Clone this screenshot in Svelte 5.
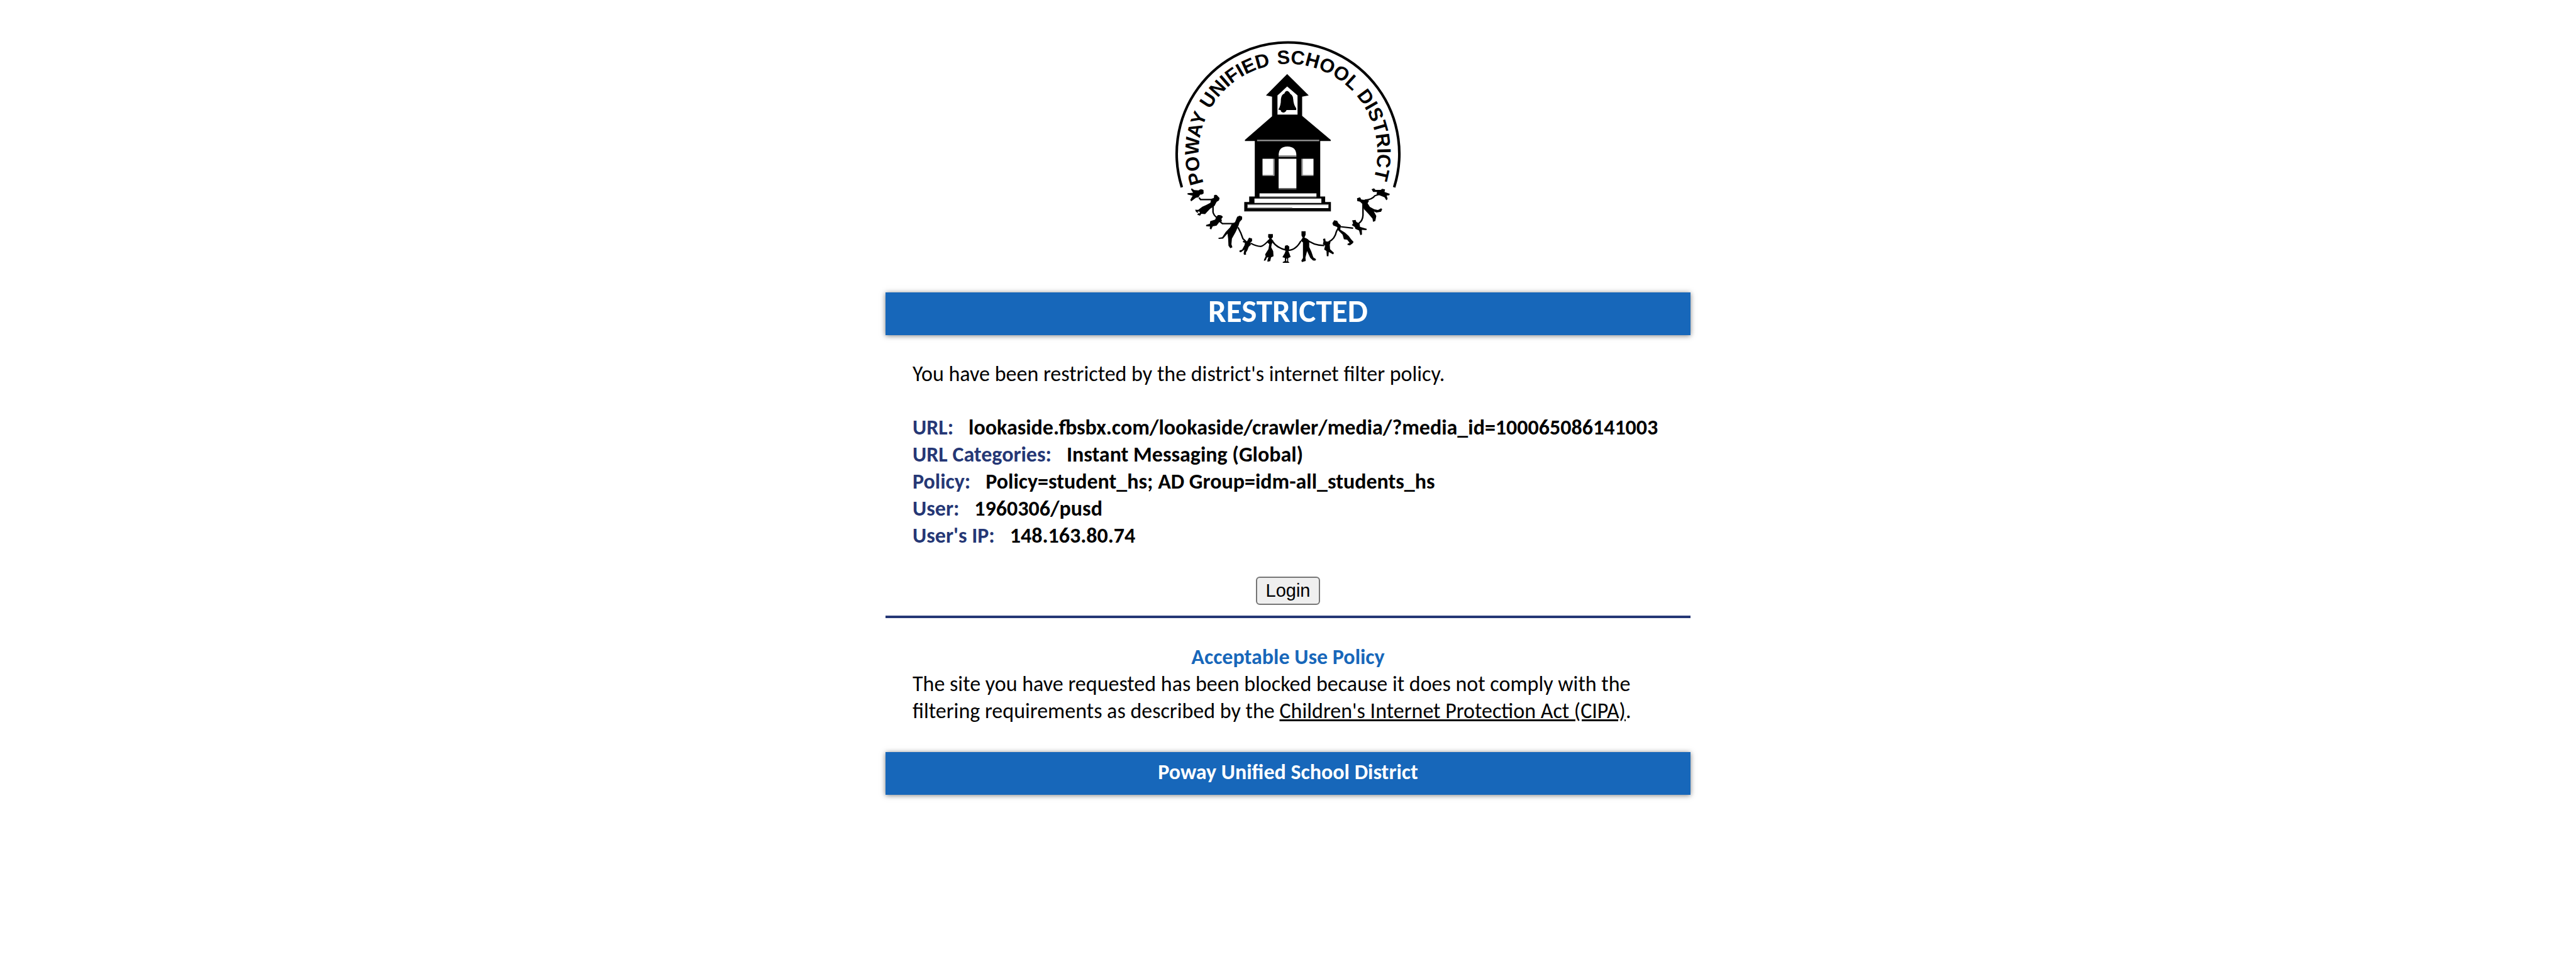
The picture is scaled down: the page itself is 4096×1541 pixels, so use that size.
<script>
  const details = [
    ['URL:', 'lookaside.fbsbx.com/lookaside/crawler/media/?media_id=100065086141003'],
    ['URL Categories:', 'Instant Messaging (Global)'],
    ['Policy:', 'Policy=student_hs; AD Group=idm-all_students_hs'],
    ['User:', '1960306/pusd'],
    ["User's IP:", '148.163.80.74'],
  ];
  // Each word of the seal with its midpoint along the lettering arc.
  const sealWords = [
    ['POWAY', 120],
    ['UNIFIED', 305],
    ['SCHOOL', 507],
    ['DISTRICT', 719],
  ];
</script>

<main class="page">
  <svg class="seal" viewBox="0 0 600 570" role="img" aria-label="Poway Unified School District seal">
    <path d="M53 365.500A259 259 0 1 1 547 365.500" fill="none" stroke="#000" stroke-width="6" />
    <path id="lettering" d="M119.900 390.600A208 208 0 1 1 480.100 390.600" fill="none" />
    {#each sealWords as [word, offset]}
      <text class="seal-word" text-anchor="middle"><textPath href="#lettering" startOffset={offset}>{word}</textPath></text>
    {/each}
    <g transform="scale(.38265 .36352)">
      <!-- schoolhouse -->
      <path d="M779 281L910 418L870 426V548L1044 702V710H980V1065H1010V1100H1045V1160H518V1100H548V1065H582V710H522V702L687 552V426L650 418Z" />
      <path d="M779 360L720 418V540H842V418Z" fill="#fff" />
      <path d="M779 388Q792 392 798 408Q815 418 816 445Q818 478 834 500V511H775Q770 526 755 527Q740 525 740 512L725 508Q741 488 741 440Q745 412 762 406Q766 390 779 388Z" />
      <path d="M596 706H974" stroke="#999" stroke-width="9" />
      <path d="M727 803Q727 745 780 745Q835 745 835 803ZM727 823H835V1010H727ZM629 823H695V926H629ZM873 823H939V926H873Z" fill="#fff" />
      <path d="M727 808H835M629 929H700M873 929H939M699 823V932M869 823V932" stroke="#999" stroke-width="7" />
      <path d="M727 1015H835" stroke="#666" stroke-width="9" />
      <path d="M611 1045H957V1065H611ZM580 1078H987V1106H580ZM538 1116H1030V1139H538Z" fill="#fff" />
      <path d="M611 1067H957M538 1117H1030M538 1137H810" stroke="#999" stroke-width="6" />
      <path d="M522 1161H1043" stroke="#bbb" stroke-width="5" />

      <!-- joined hands -->
      <path fill="none" stroke="#000" stroke-width="9" d="M243 1072L252 1084H325M328 1100V1165Q332 1185 352 1200M370 1225L385 1238H460M480 1262Q500 1300 510 1335L535 1360M558 1364Q590 1384 620 1384Q640 1378 668 1344M690 1352Q715 1394 775 1409Q830 1414 862 1350M890 1335Q940 1380 1005 1378M1030 1357Q1070 1335 1078 1290L1092 1262M1095 1257L1180 1268M1215 1236Q1238 1220 1240 1185V1110M1250 1088Q1295 1085 1312 1060L1340 1050" />

      <!-- outer left child -->
      <path d="M198 1012L214 1024L240 1026Q252 1013 270 1024L271 1045Q260 1056 250 1052L240 1070L224 1073L195 1096L190 1086L204 1060L173 1052V1044L207 1041L194 1020Z" />
      <!-- woman -->
      <path d="M335 1056Q350 1050 357 1063L368 1075L364 1090L350 1099L337 1125Q310 1140 293 1162L280 1178L257 1175L249 1188L232 1182L239 1171L225 1163L219 1149L238 1150L263 1130Q285 1121 312 1105L317 1080L333 1074Z" />
      <path d="M235 1159L249 1163L244 1175L238 1169Z" fill="#fff" />
      <!-- small girl -->
      <path d="M358 1184Q380 1180 388 1196L379 1208L382 1224L366 1229L350 1251L326 1256L317 1276L308 1270L310 1257L286 1255V1247L309 1239L311 1223L341 1213L347 1197Z" />
      <!-- man, left -->
      <path d="M475 1195L490 1188L505 1194V1211L490 1228L482 1254L466 1291L443 1335L440 1371L446 1390L433 1396L422 1380L420 1335L416 1302L389 1335L362 1337L361 1329L384 1325L405 1292L432 1262L442 1241L462 1229Z" />
      <path d="M547 1328L565 1334L566 1350L556 1360L558 1374L545 1387L537 1409L528 1424L529 1437L517 1438L514 1430L519 1405L497 1422L488 1418L490 1410L505 1405L520 1376L522 1362L509 1357L512 1348L535 1352Z" />
      <!-- woman, centre left -->
      <path d="M664 1305H692V1325L683 1335L696 1350L685 1370L682 1390L694 1415L696 1447L681 1454L676 1478L659 1482V1473L665 1452L655 1456L649 1472L638 1477V1469L648 1448L645 1435L665 1402L670 1370L656 1357L671 1335L663 1325Z" />
      <!-- child, centre -->
      <path d="M766 1380L780 1376L792 1386L791 1402L787 1415L793 1430L800 1451L785 1459V1479L793 1490H752V1484L765 1477V1458L750 1453L764 1428L769 1413L763 1401Z" />
      <path d="M776 1462V1479" stroke="#fff" stroke-width="6" />
      <!-- man, centre -->
      <path d="M866 1287H891V1310L884 1327L904 1338L913 1350V1388L926 1417L938 1454L955 1466L950 1475L936 1474L919 1457L900 1414L890 1455L892 1477L869 1484L865 1475L875 1458V1359L861 1348L873 1328L866 1314Z" />
      <!-- boy -->
      <path d="M997 1337L1010 1334L1013 1352L1043 1356L1038 1374L1040 1402L1064 1426L1058 1435L1032 1420L1030 1447H1020L1018 1414L1004 1404L1010 1379L996 1370L1000 1353Z" />
      <!-- woman, right -->
      <path d="M1065 1217L1083 1221L1090 1236L1105 1249L1102 1277L1131 1296L1154 1318L1167 1338L1183 1356L1176 1366L1160 1378L1145 1374L1147 1367L1159 1362L1144 1342L1124 1339L1116 1309L1090 1282L1083 1260L1059 1250L1054 1236Z" />
      <!-- small child -->
      <path d="M1174 1218L1195 1215L1200 1228L1219 1237L1222 1259L1264 1272L1260 1280L1233 1278L1234 1308L1224 1312L1216 1282L1194 1272L1190 1260L1172 1248L1180 1237Z" />
      <!-- man, right -->
      <path d="M1204 1076L1222 1070L1230 1084L1252 1087L1277 1092L1268 1108L1282 1131L1308 1146L1331 1151L1350 1140L1357 1146L1350 1162L1321 1167L1306 1160L1321 1190L1315 1222L1301 1227L1298 1207L1272 1174L1245 1144L1239 1115L1222 1098L1205 1094Z" />
      <!-- outer right child -->
      <path d="M1292 1018L1307 1012L1316 1023L1348 1023L1357 1015L1374 1020L1371 1036L1403 1048L1400 1057L1384 1059L1390 1081L1382 1089L1371 1070L1342 1058L1323 1051L1325 1036L1302 1036Z" />
    </g>
  </svg>

  <h1 class="bar title">RESTRICTED</h1>

  <section class="content">
    <p class="intro">You have been restricted by the district's internet filter policy.</p>
    <dl class="details">
      {#each details as [label, value]}
        <div class="detail"><dt>{label}</dt><dd>{value}</dd></div>
      {/each}
    </dl>
  </section>

  <button class="login" type="button">Login</button>
  <hr class="rule" />

  <section class="content">
    <h2 class="policy-title">Acceptable Use Policy</h2>
    <p>The site you have requested has been blocked because it does not comply with the filtering requirements as described by the <a href="#cipa">Children's Internet Protection Act (CIPA)</a>.</p>
  </section>

  <footer class="bar">Poway Unified School District</footer>
</main>

<style>
  :global(body) {
    margin: 0;
    background: #fff;
  }
  .page {
    display: flex;
    flex-direction: column;
    max-width: 1280px;
    margin: 0 auto;
    padding: 48px 0;
    color: #000;
    font-family: Carlito, Calibri, Lato, sans-serif;
    font-size: 34px;
    line-height: 43px;
  }
  h1, h2, p, dl, dd {
    margin: 0;
  }
  .seal {
    align-self: center;
    width: 410px;
    margin-bottom: 27px;
  }
  .seal-word {
    font-family: "Liberation Sans", Arial, sans-serif;
    font-size: 45px;
    font-weight: 700;
  }
  .bar {
    padding-bottom: 4px;
    background: #1767ba;
    box-shadow: 0 1px 8px rgba(0, 0, 0, 0.5);
    color: #fff;
    font-weight: 700;
    line-height: 64px;
    text-align: center;
  }
  .title {
    padding-bottom: 8px;
    font-size: 51px;
    line-height: 60px;
  }
  .content {
    padding: 40px 43px 44px;
  }
  .intro {
    margin-bottom: 42px;
  }
  .detail {
    display: flex;
    gap: 24px;
    font-weight: 700;
  }
  dt {
    color: #253775;
  }
  .login {
    align-self: center;
    padding: 4px 14px;
    border: 2px solid #767676;
    border-radius: 6px;
    background: #efefef;
    color: #000;
    font: 29px/33px "Liberation Sans", Arial, sans-serif;
  }
  .rule {
    width: 100%;
    height: 4px;
    margin: 17px 0 0;
    border: 0;
    background: #253775;
  }
  .policy-title {
    color: #1767ba;
    font-size: 34px;
    text-align: center;
  }
  a {
    color: inherit;
  }
</style>
